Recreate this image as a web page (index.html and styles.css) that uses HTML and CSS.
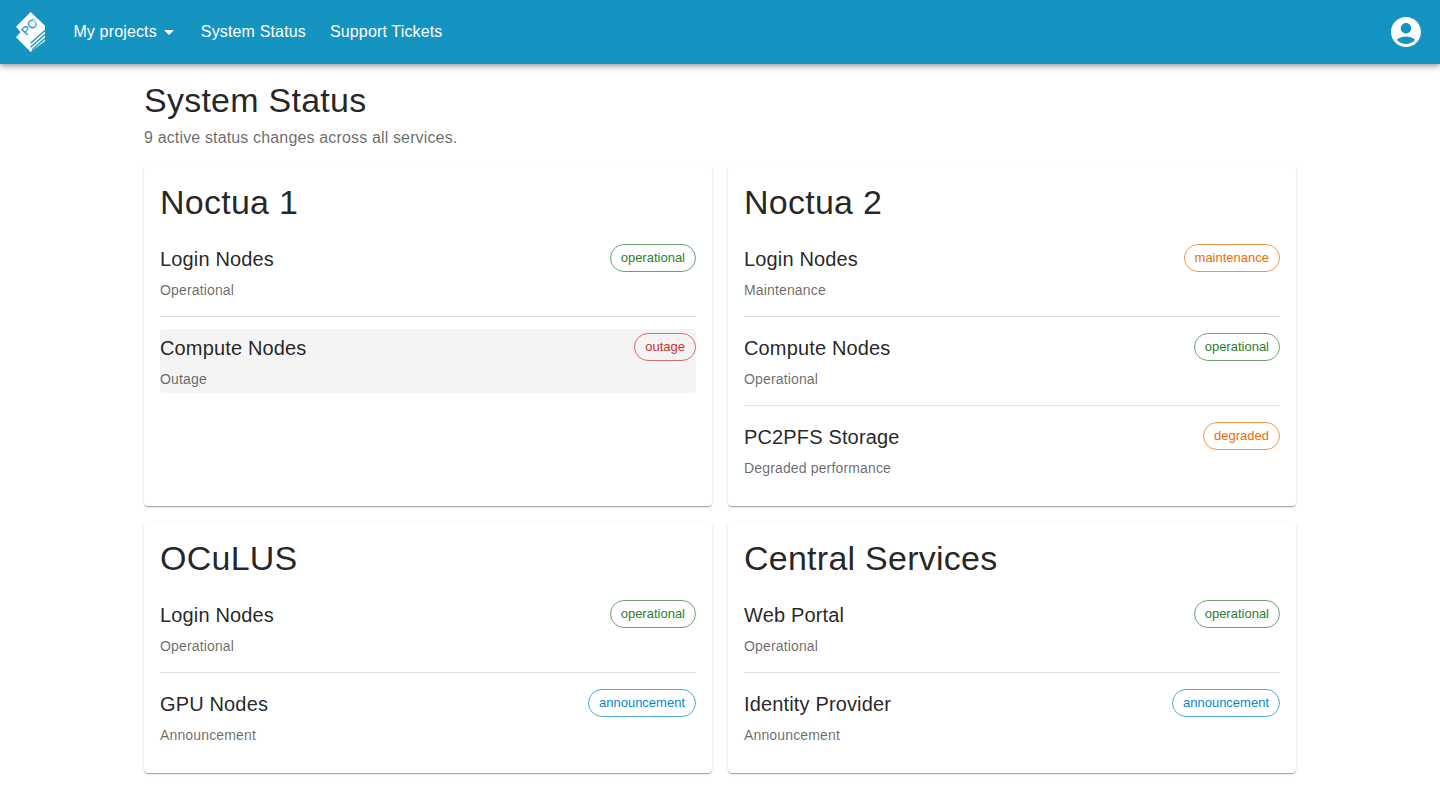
FILE: index.html
```html
<!DOCTYPE html>
<html lang="en">
<head>
<meta charset="utf-8">
<title>System Status</title>
<link rel="stylesheet" href="styles.css">
</head>
<body>
<header class="appbar">
  <svg class="logo" width="30" height="40" viewBox="0 0 30 40">
    <path fill="#fff" d="M14.7 0 29 13.7V29L14.7 40 0 25.3l4.6-5.3L0 14.7z"/>
    <path class="logo-page" d="M4.6 19.5 14 29"/>
    <path class="logo-line" d="M14.6 31.2 29.2 18.2M14.6 35.2 29.2 22.2M15.8 38.2 29.2 26.2"/>
    <text class="logo-text" transform="translate(10.6 24) rotate(-47)">PC</text>
    <text class="logo-sup" transform="translate(18.2 11) rotate(-45)">2</text>
  </svg>
  <nav class="nav">
    <a class="nav-link">My projects<svg class="caret" width="24" height="24" viewBox="0 0 24 24"><path fill="currentColor" d="m7 10 5 5 5-5z"/></svg></a>
    <a class="nav-link">System Status</a>
    <a class="nav-link">Support Tickets</a>
  </nav>
  <svg class="account" width="36" height="36" viewBox="0 0 24 24"><path fill="currentColor" d="M12 2C6.48 2 2 6.48 2 12s4.48 10 10 10 10-4.48 10-10S17.52 2 12 2zm0 4c1.93 0 3.5 1.57 3.5 3.5S13.93 13 12 13s-3.5-1.57-3.5-3.5S10.07 6 12 6zm0 14c-2.03 0-4.43-.82-6.14-2.88C7.55 15.8 9.68 15 12 15s4.45.8 6.14 2.12C16.43 19.18 14.03 20 12 20z"/></svg>
</header>
<main class="container">
  <h1 class="title">System Status</h1>
  <p class="subtitle">9 active status changes across all services.</p>
  <div class="grid">
    <section class="card">
      <h2 class="title">Noctua 1</h2>
      <div class="services">
        <div class="service"><div><h3 class="name">Login Nodes</h3><p class="state">Operational</p></div><span class="chip success">operational</span></div>
        <hr class="divider">
        <div class="service active"><div><h3 class="name">Compute Nodes</h3><p class="state">Outage</p></div><span class="chip error">outage</span></div>
      </div>
    </section>
    <section class="card">
      <h2 class="title">Noctua 2</h2>
      <div class="services">
        <div class="service"><div><h3 class="name">Login Nodes</h3><p class="state">Maintenance</p></div><span class="chip warning">maintenance</span></div>
        <hr class="divider">
        <div class="service"><div><h3 class="name">Compute Nodes</h3><p class="state">Operational</p></div><span class="chip success">operational</span></div>
        <hr class="divider">
        <div class="service"><div><h3 class="name">PC2PFS Storage</h3><p class="state">Degraded performance</p></div><span class="chip warning">degraded</span></div>
      </div>
    </section>
    <section class="card">
      <h2 class="title">OCuLUS</h2>
      <div class="services">
        <div class="service"><div><h3 class="name">Login Nodes</h3><p class="state">Operational</p></div><span class="chip success">operational</span></div>
        <hr class="divider">
        <div class="service"><div><h3 class="name">GPU Nodes</h3><p class="state">Announcement</p></div><span class="chip info">announcement</span></div>
      </div>
    </section>
    <section class="card">
      <h2 class="title">Central Services</h2>
      <div class="services">
        <div class="service"><div><h3 class="name">Web Portal</h3><p class="state">Operational</p></div><span class="chip success">operational</span></div>
        <hr class="divider">
        <div class="service"><div><h3 class="name">Identity Provider</h3><p class="state">Announcement</p></div><span class="chip info">announcement</span></div>
      </div>
    </section>
  </div>
</main>
</body>
</html>
```
FILE: styles.css
```css
* { box-sizing: border-box; }
body {
  min-height: 787px;
  margin: 0;
  background: #fff;
  color: rgba(0, 0, 0, 0.87);
  font: 400 16px/1.5 "Liberation Sans", Helvetica, Arial, sans-serif;
  letter-spacing: 0.00938em;
  -webkit-font-smoothing: antialiased;
}
h1, h2, h3, p { margin: 0; font-weight: 400; }
.appbar {
  display: flex;
  align-items: center;
  height: 64px;
  padding: 0 16px;
  background: #1694c1;
  color: #fff;
  box-shadow: 0 2px 4px -1px rgba(0, 0, 0, 0.2), 0 4px 5px rgba(0, 0, 0, 0.14), 0 1px 10px rgba(0, 0, 0, 0.12);
}
.logo { overflow: visible; }
.logo-line { fill: none; stroke: #1694c1; stroke-width: 1.3; }
.logo-page { fill: none; stroke: #a2d4e6; stroke-width: 0.5; }
.logo-text { fill: #1694c1; stroke: #1694c1; stroke-width: 0.2; font-size: 12px; letter-spacing: 0; }
.logo-sup { fill: #1694c1; font-size: 6px; }
.nav { display: flex; gap: 24px; margin-left: 27.4px; }
.nav-link { display: flex; align-items: center; }
.nav-link:first-child { margin-right: -4px; }
.caret { margin: 0 -0.6px 0 0.6px; }
.account { margin-left: auto; }
.container { width: 1152px; margin: 0 auto; padding: 16px 0 12px; }
.title { padding-bottom: 2px; font-size: 34px; line-height: 40px; letter-spacing: 0.00735em; }
.subtitle { margin-top: 4px; color: rgba(0, 0, 0, 0.6); }
.grid { display: grid; grid-template-columns: 1fr 1fr; gap: 16px; margin-top: 16px; }
.card {
  padding: 16px 16px 24px;
  border-radius: 4px;
  background: #fff;
  box-shadow: 0 2px 1px -1px rgba(0, 0, 0, 0.2), 0 1px 1px rgba(0, 0, 0, 0.14), 0 1px 3px rgba(0, 0, 0, 0.12);
}
.services { display: flex; flex-direction: column; gap: 12px; margin-top: 16px; }
.service {
  display: flex;
  justify-content: space-between;
  align-items: flex-start;
  padding: 4px 0;
  border-radius: 4px;
}
.active { background: #f4f4f4; }
.name { padding-bottom: 2px; font-size: 20px; line-height: 30px; letter-spacing: 0.0075em; }
.state { margin-top: 4px; font-size: 14px; line-height: 20px; letter-spacing: 0.01071em; color: rgba(0, 0, 0, 0.6); }
.divider { width: 100%; height: 1px; margin: 0; border: 0; background: #e0e0e0; }
.chip {
  height: 28px;
  padding: 0 10px;
  border: 1px solid;
  border-radius: 14px;
  font-size: 13px;
  line-height: 26px;
  letter-spacing: 0;
}
.success { color: #2e7d32; border-color: rgba(46, 125, 50, 0.7); }
.error { color: #d32f2f; border-color: rgba(211, 47, 47, 0.7); }
.warning { color: #ed6c02; border-color: rgba(237, 108, 2, 0.7); }
.info { color: #0288d1; border-color: rgba(2, 136, 209, 0.7); }
```
